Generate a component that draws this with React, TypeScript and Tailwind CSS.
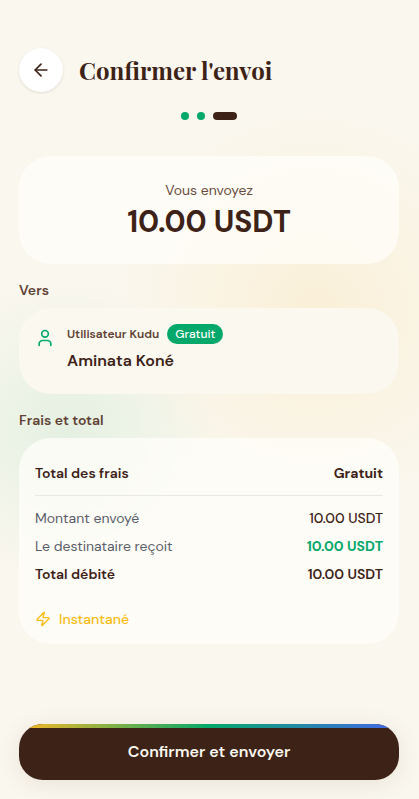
import type { ReactNode } from "react";
import { ArrowLeft, User, Zap } from "lucide-react";

type RowProps = {
  label: string;
  value: string;
  labelClass: string;
  valueClass: string;
};

function Row({ label, value, labelClass, valueClass }: RowProps) {
  return (
    <div className="flex items-center justify-between">
      <dt className={labelClass}>{label}</dt>
      <dd className={valueClass}>{value}</dd>
    </div>
  );
}

function Section({ title, children }: { title: string; children: ReactNode }) {
  return (
    <section className="mt-4">
      <h2 className="mb-2 text-sm leading-5 font-semibold text-[#5f4234]">{title}</h2>
      {children}
    </section>
  );
}

function Steps() {
  return (
    <div className="mt-5 flex justify-center gap-2" role="img" aria-label="3 / 3">
      <span className="size-2 rounded-full bg-[#05a86b]" />
      <span className="size-2 rounded-full bg-[#05a86b]" />
      <span className="h-2 w-6 rounded-full bg-[#3d2217]" />
    </div>
  );
}

export default function App() {
  return (
    <div className="flex min-h-screen flex-col bg-[#faf7ee] bg-[radial-gradient(circle_at_16%_430px,rgba(5,168,107,0.09),transparent_150px),radial-gradient(circle_at_75%_310px,rgba(250,195,80,0.14),transparent_200px)] pt-12 pr-5 pb-[19px] pl-[19px] font-['DM_Sans',Inter,sans-serif] text-[#3d2217]">
      <header className="flex items-center gap-4">
        <button
          type="button"
          aria-label="Retour"
          className="flex size-11 items-center justify-center rounded-full bg-white shadow-[0_1px_3px_rgba(61,34,23,0.12)]"
        >
          <ArrowLeft size={20} strokeWidth={2} />
        </button>
        <h1 className="font-['Playfair_Display','Liberation_Serif',serif] text-2xl leading-8 font-bold">
          Confirmer l'envoi
        </h1>
      </header>

      <Steps />

      <main className="mt-9 mb-8">
        <section className="rounded-[32px] bg-[#fffefa]/75 p-6 text-center">
          <p className="text-sm leading-5 text-[#6a4d40]">Vous envoyez</p>
          <p className="mt-1 text-3xl leading-9 font-bold">10.00 USDT</p>
        </section>

        <Section title="Vers">
          <div className="flex gap-3 rounded-[32px] bg-[#faf8ef] px-4 pt-4 pb-5">
            <User size={20} className="mt-1 text-[#05a86b]" />
            <div>
              <div className="flex items-center gap-2">
                <span className="text-xs leading-5 font-semibold text-[#5f4234]">Utilisateur Kudu</span>
                <span className="rounded-full bg-[#05a86b] px-2 text-xs leading-5 font-medium text-white">
                  Gratuit
                </span>
              </div>
              <p className="mt-1 text-base leading-[26px] font-semibold">Aminata Koné</p>
            </div>
          </div>
        </Section>

        <Section title="Frais et total">
          <div className="rounded-[32px] bg-[#fffefa]/75 px-4 pt-[25px] pb-[15px] text-sm leading-5">
            <dl>
              <div className="border-b border-[#e9e8e3] pb-3">
                <Row
                  label="Total des frais"
                  value="Gratuit"
                  labelClass="font-semibold"
                  valueClass="font-bold"
                />
              </div>
              <div className="mt-3 flex flex-col gap-2">
                <Row label="Montant envoyé" value="10.00 USDT" labelClass="text-[#5b5d69]" valueClass="font-medium" />
                <Row
                  label="Le destinataire reçoit"
                  value="10.00 USDT"
                  labelClass="text-[#5b5d69]"
                  valueClass="font-bold text-[#05a86b]"
                />
                <Row label="Total débité" value="10.00 USDT" labelClass="font-semibold" valueClass="font-semibold" />
              </div>
            </dl>
            <p className="mt-[25px] flex items-center gap-2 font-medium text-[#f9bc15]">
              <Zap size={16} />
              Instantané
            </p>
          </div>
        </Section>
      </main>

      <button
        type="button"
        className="mt-auto flex flex-col overflow-hidden rounded-3xl bg-[#3d2217] text-base leading-6 font-semibold text-[#faf7ee] shadow-[0_4px_24px_rgba(61,34,23,0.09)]"
      >
        <span className="h-1 w-full bg-linear-to-r/srgb from-[#fbb724] via-[#05a86b] to-[#4466e8]" />
        <span className="w-full pt-3 pb-4">Confirmer et envoyer</span>
      </button>
    </div>
  );
}
